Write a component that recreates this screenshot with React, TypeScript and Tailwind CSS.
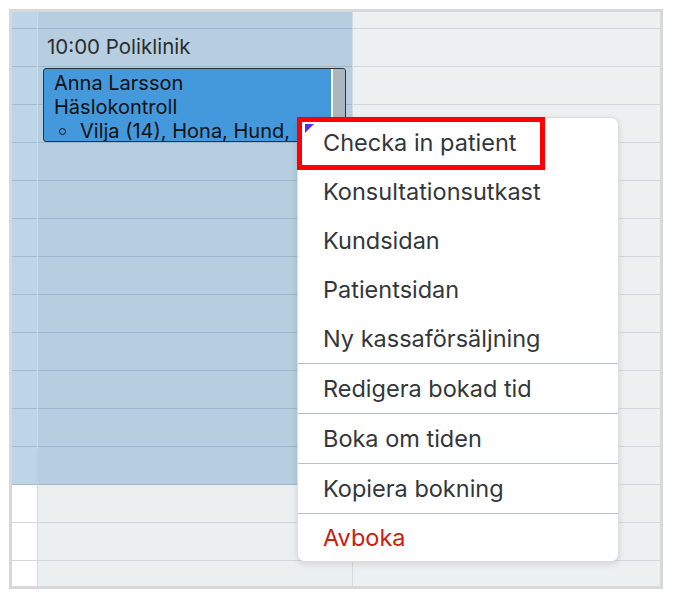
import React from "react";

const rows = Array.from({ length: 14 });

function Column({ width, tone }: { width: string; tone: "side" | "main" | "rest" }) {
  // blue highlight covers the first 12 full rows (to y=485)
  const cell = (i: number) => {
    const blue = i < 12;
    if (tone === "rest") return "bg-[#edf0f1] border-[#d3d7d9]";
    if (tone === "side") return blue ? "bg-[#bed4e7] border-[#a5bccf]" : "bg-white border-[#d3d7d9]";
    return blue ? "bg-[#b7cde0] border-[#a0b7cb]" : "bg-[#eceff0] border-[#d3d7d9]";
  };
  return (
    <div className={`flex flex-col ${width} ${tone === "rest" ? "" : "border-r border-[#d6dadc]"}`}>
      <div className={`h-[17px] border-b ${cell(0)}`} />
      {rows.map((_, i) => (
        <div key={i} className={`h-[38px] border-b ${cell(i)} ${i === 11 ? "shadow-[0_2px_3px_rgba(0,0,0,0.08)]" : ""}`} />
      ))}
      <div className={`flex-1 ${cell(20)}`} />
    </div>
  );
}

const items = ["Checka in patient", "Konsultationsutkast", "Kundsidan", "Patientsidan", "Ny kassaförsäljning"];

const grouped = ["Redigera bokad tid", "Boka om tiden", "Kopiera bokning"];

export default function App() {
  return (
    <div className="relative w-[677px] h-[600px] bg-white font-['Inter',sans-serif]">
      {/* calendar frame */}
      <div className="absolute left-[9px] top-[9px] w-[654px] h-[580px] border-[3px] border-[#d8d8d8] flex overflow-hidden">
        <Column width="w-[26px]" tone="side" />
        <Column width="w-[315px]" tone="main" />
        <div className="flex-1 flex">
          <Column width="w-full" tone="rest" />
        </div>
      </div>

      {/* event header */}
      <div className="absolute left-[47px] top-[35px] text-[20.5px] leading-[24px] text-[#2a2d30]">
        10:00 Poliklinik
      </div>

      {/* booking */}
      <div className="absolute left-[43px] top-[68px] w-[303px] h-[74px] rounded-[3px] border border-[#2a3440] bg-[#4499dd] overflow-hidden flex">
        <div className="flex-1 pl-[10px] pt-[2px] text-[20px] leading-[24px] text-[#111] whitespace-nowrap overflow-hidden">
          <div>Anna Larsson</div>
          <div>Häslokontroll</div>
          <div className="flex items-center">
            <span className="inline-block w-[7px] h-[7px] rounded-full border border-[#111] ml-[5px] mr-[14px]" />
            Vilja (14), Hona, Hund, ...
          </div>
        </div>
        <div className="w-[2px] bg-white" />
        <div className="w-[12px] bg-[#aeb6bd]" />
      </div>

      {/* context menu */}
      <div className="absolute left-[297px] top-[117px] w-[322px] bg-white rounded-[8px] border border-[#dcdfe2] shadow-[0_2px_6px_rgba(0,0,0,0.12)] text-[23.5px] text-[#33373b] overflow-hidden">
        {items.map((label) => (
          <div key={label} className="h-[49px] pl-[25px] flex items-center">
            {label}
          </div>
        ))}
        {grouped.map((g) => (
          <div key={g} className="h-[50px] pl-[25px] flex items-center border-t border-[#b9bfc6]">
            {g}
          </div>
        ))}
        <div className="h-[48px] pl-[25px] flex items-center border-t border-[#b9bfc6] text-[#c8200e]">
          Avboka
        </div>
      </div>

      {/* highlight annotation */}
      <div className="absolute left-[297px] top-[117px] w-[248px] h-[53px] border-[5px] border-[#ff0000]" />
      <svg className="absolute left-[305px] top-[124px]" width="9" height="9" viewBox="0 0 9 9">
        <polygon points="0,0 9,0 0,9" fill="#5a2ee6" />
      </svg>
    </div>
  );
}
